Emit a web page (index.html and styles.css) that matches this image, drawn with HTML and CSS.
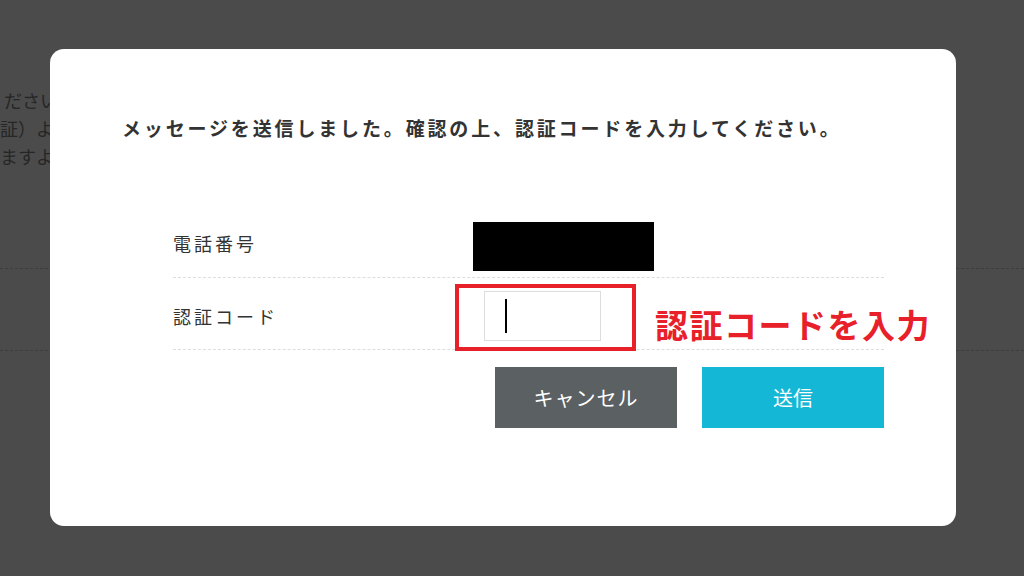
FILE: index.html
```html
<!DOCTYPE html>
<html lang="ja">
<head>
    <meta charset="UTF-8">
    <title>認証コード入力</title>
    <link rel="stylesheet" href="styles.css">
</head>
<body>

    <!-- 背面のページ -->
    <div class="bg-page">
        <p class="bg-line bg-line-1">ださい。</p>
        <p class="bg-line bg-line-2">証）より</p>
        <p class="bg-line bg-line-3">ますよう</p>
        <div class="bg-rule bg-rule-1"></div>
        <div class="bg-rule bg-rule-2"></div>
    </div>

    <!-- モーダル -->
    <div class="overlay">
        <section class="modal">
            <h2 class="modal-title">メッセージを送信しました。確認の上、認証コードを入力してください。</h2>

            <form class="verify-form" id="verify-form">
                <div class="form-row row-phone">
                    <div class="form-label">電話番号</div>
                    <div class="form-value">
                        <div class="masked"></div>
                    </div>
                </div>
                <div class="form-row row-code">
                    <label class="form-label" for="code">認証コード</label>
                    <div class="form-value">
                        <div class="code-wrap">
                            <input type="text" id="code" class="code-input">
                            <span class="caret"></span>
                            <span class="highlight-box"></span>
                            <span class="highlight-text">認証コードを入力</span>
                        </div>
                    </div>
                </div>

                <div class="form-actions">
                    <button type="button" class="btn btn-cancel">キャンセル</button>
                    <button type="submit" class="btn btn-send">送信</button>
                </div>
            </form>
        </section>
    </div>

</body>
</html>
```

FILE: styles.css
```css
/* 全体 */

:root {
    --overlay-color: #4b4b4b;
    --text-color: #333333;
    --line-color: #dddddd;
    --mark-color: #e8202a;
    --cancel-color: #5b6063;
    --send-color: #14b8d6;
}

body {
    margin: 0;
    width: 1024px;
    height: 576px;
    overflow: hidden;
    background-color: var(--overlay-color);
    font-family: "Noto Sans CJK JP", "Noto Sans", sans-serif;
    color: var(--text-color);
}

/* 背面のページ */
.bg-page {
    padding-top: 86px;
}

.bg-line {
    margin: 0;
    font-size: 18px;
    line-height: 28px;
    color: #262626;
    white-space: nowrap;
}

.bg-line-1 {
    padding-left: 4px;
}

.bg-rule {
    border-top: 1px dashed #3d3d3d;
}

.bg-rule-1 {
    margin-top: 98px;
}

.bg-rule-2 {
    margin-top: 81px;
}

/* モーダル */
.overlay {
    position: fixed;
    inset: 0;
    padding: 49px 68px 50px 50px;
}

.modal {
    box-sizing: border-box;
    width: 906px;
    height: 477px;
    padding: 67px 0 0 72px;
    background-color: #FFFFFF;
    border-radius: 14px;
}

.modal-title {
    margin: 0;
    font-size: 19px;
    line-height: 24px;
    font-weight: bold;
    letter-spacing: 2.85px;
}

.verify-form {
    width: 711px;
    margin: 69px 0 0 51px;
}

.form-row {
    display: grid;
    grid-template-columns: 300px 1fr;
    align-items: center;
    border-bottom: 1px dashed var(--line-color);
}

.row-phone {
    padding: 13px 0 6px;
}

.row-phone .form-label {
    padding-bottom: 7px;
}

.row-code {
    padding: 13px 0 8px;
}

.form-label {
    font-size: 18px;
    letter-spacing: 3px;
}

.masked {
    width: 181px;
    height: 49px;
    background-color: #000000;
}

.code-wrap {
    position: relative;
    width: 117px;
    height: 50px;
    margin-left: 11px;
}

.code-input {
    box-sizing: border-box;
    width: 117px;
    height: 50px;
    margin: 0;
    border: 1px solid #dddddd;
    outline: none;
}

.caret {
    position: absolute;
    left: 21px;
    top: 8px;
    width: 2px;
    height: 34px;
    background-color: #000000;
}

.highlight-box {
    position: absolute;
    left: -29px;
    top: -7px;
    width: 173px;
    height: 59px;
    border: 4px solid var(--mark-color);
}

.highlight-text {
    position: absolute;
    left: 171px;
    top: 15px;
    font-size: 33px;
    line-height: 36px;
    font-weight: bold;
    letter-spacing: 1.5px;
    color: var(--mark-color);
    white-space: nowrap;
}

.form-actions {
    display: flex;
    justify-content: flex-end;
    gap: 25px;
    margin-top: 17px;
}

.btn {
    width: 182px;
    height: 61px;
    border: none;
    font-family: inherit;
    font-size: 20px;
    color: #FFFFFF;
    cursor: pointer;
}

.btn-cancel {
    background-color: var(--cancel-color);
    letter-spacing: 1px;
}

.btn-send {
    background-color: var(--send-color);
}
```
